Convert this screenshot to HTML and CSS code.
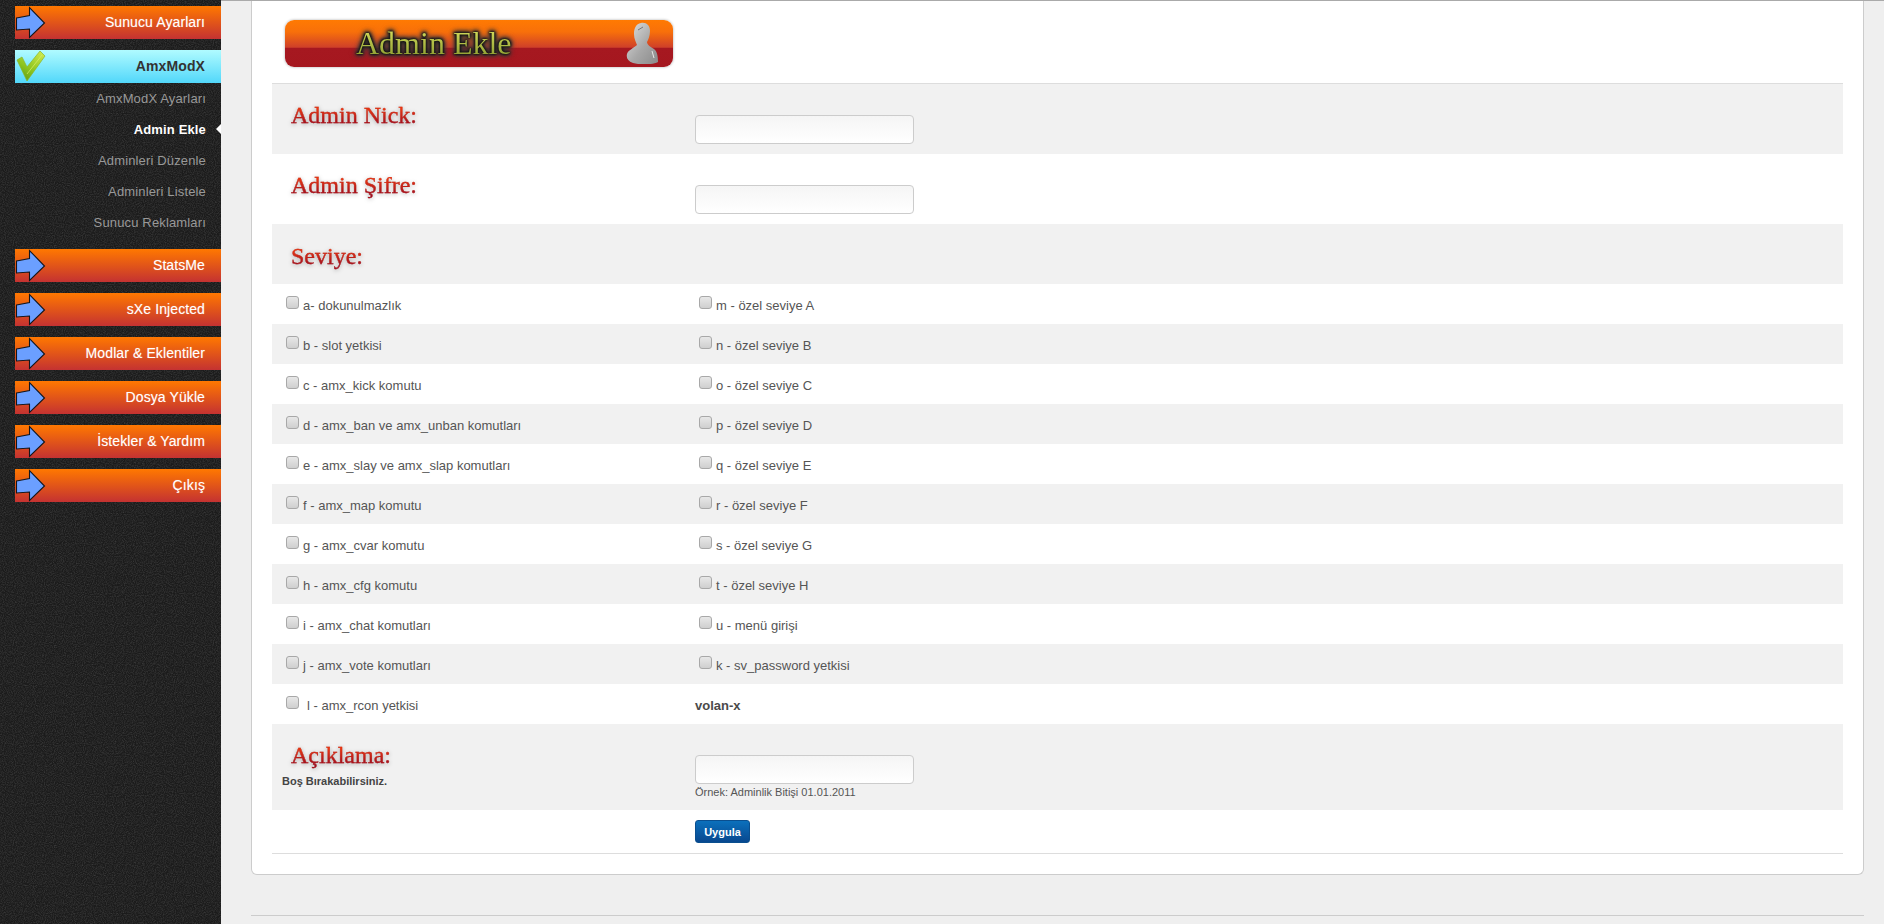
FILE: index.html
```html
<!DOCTYPE html>
<html lang="tr">
<head>
    <meta charset="UTF-8">
    <title>Admin Ekle</title>
    <link rel="stylesheet" href="styles.css">
</head>
<body>
    <svg class="defs" width="0" height="0">
        <defs>
            <symbol id="arrow" viewBox="0 0 32 33">
                <path d="M1.5 12 L14.5 9.5 L14.5 1.5 L29.5 17 L14.5 31.5 L14.5 23 L1.5 24 Z" fill="#6b9fff" stroke="#14161c" stroke-width="1.1" stroke-linejoin="miter"/>
            </symbol>
            <linearGradient id="checkFill" x1="0.8" y1="0" x2="0.2" y2="1">
                <stop offset="0" stop-color="#cbe84a"/>
                <stop offset="0.6" stop-color="#8cc41e"/>
                <stop offset="1" stop-color="#5f9e12"/>
            </linearGradient>
            <linearGradient id="userFill" x1="0" y1="0" x2="1" y2="1">
                <stop offset="0" stop-color="#e2e2e2"/>
                <stop offset="0.55" stop-color="#a8a8a8"/>
                <stop offset="1" stop-color="#8a8a8a"/>
            </linearGradient>
        </defs>
    </svg>

    <!-- Sidebar -->
    <aside class="sidebar">
        <a class="menu-item"><svg class="menu-icon"><use href="#arrow"/></svg>Sunucu Ayarları</a>
        <a class="menu-item active">
            <svg class="menu-icon" viewBox="0 0 32 33">
                <path d="M2 10 L7 7 L12 17 L25 1 L30 6 L12 31 Z" fill="url(#checkFill)" stroke="#8ab52a" stroke-width="0.7"/>
                <path d="M12 24 L27 5" stroke="#d9f06a" stroke-width="1" opacity="0.7" fill="none"/>
            </svg>
            AmxModX
        </a>
        <ul class="submenu">
            <li>AmxModX Ayarları</li>
            <li class="current">Admin Ekle</li>
            <li>Adminleri Düzenle</li>
            <li>Adminleri Listele</li>
            <li>Sunucu Reklamları</li>
        </ul>
        <a class="menu-item"><svg class="menu-icon"><use href="#arrow"/></svg>StatsMe</a>
        <a class="menu-item"><svg class="menu-icon"><use href="#arrow"/></svg>sXe Injected</a>
        <a class="menu-item"><svg class="menu-icon"><use href="#arrow"/></svg>Modlar &amp; Eklentiler</a>
        <a class="menu-item"><svg class="menu-icon"><use href="#arrow"/></svg>Dosya Yükle</a>
        <a class="menu-item"><svg class="menu-icon"><use href="#arrow"/></svg>İstekler &amp; Yardım</a>
        <a class="menu-item"><svg class="menu-icon"><use href="#arrow"/></svg>Çıkış</a>
    </aside>

    <main class="main">
        <div class="card">
            <!-- Page banner -->
            <div class="banner">
                <span class="banner-title">Admin Ekle</span>
                <svg class="banner-user" viewBox="0 0 32 42">
                    <path d="M15 1 C20 0 24 3 24 9 C24 14 22 18 21 20 C21 23 25 25 28 27 C31 29 32 34 32 40 C26 43 14 43 7 41 C2 39 0 36 1 32 C2 28 8 26 11 23 C10 20 8 17 8 12 C8 6 10 2 15 1 Z" fill="url(#userFill)"/>
                    <path d="M12 8 L17 5" stroke="#777" stroke-width="1" fill="none"/>
                    <path d="M26 29 L28 36" stroke="#e8e8e8" stroke-width="1" fill="none"/>
                </svg>
            </div>

            <form class="form">
                <div class="row head-row shaded">
                    <div class="cell-left"><span class="field-title">Admin Nick:</span></div>
                    <div class="cell-right"><input class="text-input" type="text"></div>
                </div>
                <div class="row head-row">
                    <div class="cell-left"><span class="field-title">Admin Şifre:</span></div>
                    <div class="cell-right"><input class="text-input" type="password"></div>
                </div>
                <div class="row level-head shaded">
                    <div class="cell-left"><span class="field-title">Seviye:</span></div>
                </div>

                <!-- Levels -->
                <div class="row check-row">
                    <label class="check"><input type="checkbox">a- dokunulmazlık</label>
                    <label class="check check-right"><input type="checkbox">m - özel seviye A</label>
                </div>
                <div class="row check-row shaded">
                    <label class="check"><input type="checkbox">b - slot yetkisi</label>
                    <label class="check check-right"><input type="checkbox">n - özel seviye B</label>
                </div>
                <div class="row check-row">
                    <label class="check"><input type="checkbox">c - amx_kick komutu</label>
                    <label class="check check-right"><input type="checkbox">o - özel seviye C</label>
                </div>
                <div class="row check-row shaded">
                    <label class="check"><input type="checkbox">d - amx_ban ve amx_unban komutları</label>
                    <label class="check check-right"><input type="checkbox">p - özel seviye D</label>
                </div>
                <div class="row check-row">
                    <label class="check"><input type="checkbox">e - amx_slay ve amx_slap komutları</label>
                    <label class="check check-right"><input type="checkbox">q - özel seviye E</label>
                </div>
                <div class="row check-row shaded">
                    <label class="check"><input type="checkbox">f - amx_map komutu</label>
                    <label class="check check-right"><input type="checkbox">r - özel seviye F</label>
                </div>
                <div class="row check-row">
                    <label class="check"><input type="checkbox">g - amx_cvar komutu</label>
                    <label class="check check-right"><input type="checkbox">s - özel seviye G</label>
                </div>
                <div class="row check-row shaded">
                    <label class="check"><input type="checkbox">h - amx_cfg komutu</label>
                    <label class="check check-right"><input type="checkbox">t - özel seviye H</label>
                </div>
                <div class="row check-row">
                    <label class="check"><input type="checkbox">i - amx_chat komutları</label>
                    <label class="check check-right"><input type="checkbox">u - menü girişi</label>
                </div>
                <div class="row check-row shaded">
                    <label class="check"><input type="checkbox">j - amx_vote komutları</label>
                    <label class="check check-right"><input type="checkbox">k - sv_password yetkisi</label>
                </div>
                <div class="row check-row">
                    <label class="check check-last"><input type="checkbox">l - amx_rcon yetkisi</label>
                    <div class="cell-right owner">volan-x</div>
                </div>

                <div class="row note-row shaded">
                    <div class="cell-left">
                        <span class="field-title">Açıklama:</span>
                        <p class="note">Boş Bırakabilirsiniz.</p>
                    </div>
                    <div class="cell-right">
                        <input class="text-input" type="text">
                        <p class="hint">Örnek: Adminlik Bitişi 01.01.2011</p>
                    </div>
                </div>
                <div class="row submit-row">
                    <div></div>
                    <div class="cell-right"><button class="btn" type="button">Uygula</button></div>
                </div>
            </form>
        </div>
        <div class="footer-line"></div>
    </main>
</body>
</html>
```
FILE: styles.css
```css
html, body {
    margin: 0;
    padding: 0;
    height: 100%;
}
body {
    display: flex;
    font-family: "Liberation Sans", Arial, sans-serif;
    font-size: 13px;
    color: #555;
    background-color: #efefef;
    overflow: hidden;
}
.defs {
    position: absolute;
}

/* Sidebar */
.sidebar {
    flex: 0 0 221px;
    box-sizing: border-box;
    height: 924px;
    padding: 6px 0 0 15px;
    background-color: #1b1b1b;
    background-image: url("data:image/svg+xml,%3Csvg xmlns='http://www.w3.org/2000/svg' width='200' height='200'%3E%3Cfilter id='n'%3E%3CfeTurbulence type='fractalNoise' baseFrequency='0.9' numOctaves='2' stitchTiles='stitch'/%3E%3CfeColorMatrix values='0 0 0 0 1 0 0 0 0 1 0 0 0 0 1 0.25 0 0 0 -0.09'/%3E%3C/filter%3E%3Crect width='200' height='200' filter='url(%23n)'/%3E%3C/svg%3E");
}
.menu-item {
    position: relative;
    display: block;
    height: 33px;
    line-height: 33px;
    margin-bottom: 11px;
    padding-right: 16px;
    text-align: right;
    font-size: 14px;
    letter-spacing: 0.1px;
    color: #fff;
    background: linear-gradient(#ff7800, #c43232);
    text-shadow: 0 0 1px rgba(255, 255, 255, 0.4);
}
.menu-item.active {
    margin-bottom: 0;
    font-weight: bold;
    color: #333;
    background: linear-gradient(#b0fbff, #52d7fa);
    text-shadow: none;
}
.menu-icon {
    position: absolute;
    left: 0;
    top: 0;
    width: 32px;
    height: 33px;
    overflow: visible;
}
.submenu {
    list-style: none;
    margin: 0 0 11px;
    padding: 0;
}
.submenu li {
    position: relative;
    height: 31px;
    line-height: 31px;
    padding-right: 15px;
    text-align: right;
    letter-spacing: 0.15px;
    color: #999;
}
.submenu li.current {
    font-weight: bold;
    color: #fff;
}
.submenu li.current::after {
    content: "";
    position: absolute;
    right: 0;
    top: 10px;
    border: 5px solid transparent;
    border-left: 0;
    border-right-color: #fff;
}

/* Main area */
.main {
    flex: 1;
    box-sizing: border-box;
    height: 924px;
    padding: 0 20px 0 30px;
    border-top: 1px solid #aaa;
}
.card {
    padding: 19px 20px 20px;
    background-color: #fff;
    border: 1px solid #ccc;
    border-top: 0;
    border-radius: 0 0 6px 6px;
}
.footer-line {
    margin-top: 40px;
    border-top: 1px solid #ccc;
}

/* Banner */
.banner {
    position: relative;
    box-sizing: border-box;
    width: 388px;
    height: 47px;
    margin: 0 0 16px 13px;
    padding-left: 71px;
    border-radius: 9px;
    background: linear-gradient(#ff7a02 0%, #f8700a 25%, #cf4029 58%, #a61820 60%, #a5171f 100%);
    box-shadow: 0 0 2px 1px #d8d8d8;
}
.banner-title {
    display: inline-block;
    font-family: "Liberation Serif", "Times New Roman", serif;
    font-size: 32px;
    line-height: 47px;
    background: linear-gradient(#d4dc5c 20%, #8c9c30 80%);
    -webkit-background-clip: text;
    background-clip: text;
    color: transparent;
    filter: drop-shadow(0 0 1px #111) drop-shadow(0 0 1px #111) drop-shadow(0 0 2px #222) drop-shadow(0 0 2px #444);
}
.banner-user {
    position: absolute;
    right: 15px;
    top: 2px;
    width: 32px;
    height: 42px;
}

/* Form rows */
.form {
    border-top: 1px solid #ddd;
}
.row {
    display: grid;
    grid-template-columns: 423px 1fr;
}
.shaded {
    background-color: #f1f1f1;
}
.head-row {
    height: 70px;
}
.level-head {
    height: 60px;
}
.check-row {
    height: 40px;
    align-items: center;
}
.note-row {
    height: 86px;
}
.submit-row {
    height: 43px;
    border-bottom: 1px solid #ddd;
}
.cell-left {
    padding: 16px 0 0 19px;
}
.level-head .cell-left {
    padding-top: 17px;
}
.note-row .cell-left {
    padding: 16px 0 0 10px;
}
.note-row .field-title {
    margin-left: 9px;
}
.field-title {
    display: inline-block;
    font-family: "Liberation Serif", "Times New Roman", serif;
    font-size: 24px;
    line-height: 30px;
    background: linear-gradient(#f03a10 25%, #a01020 80%);
    -webkit-background-clip: text;
    background-clip: text;
    color: transparent;
    -webkit-text-stroke: 0.3px rgba(170, 20, 20, 0.5);
    filter: drop-shadow(0 1px 2px rgba(0, 0, 0, 0.3));
}
.note {
    margin: 5px 0 0;
    font-size: 11px;
    font-weight: bold;
    color: #444;
}
.text-input {
    display: block;
    box-sizing: border-box;
    width: 219px;
    height: 29px;
    margin: 31px 0 0;
    border: 1px solid #ccc;
    border-radius: 4px;
    background: linear-gradient(#f5f5f5, #fff);
}
.hint {
    margin: 2px 0 0;
    font-size: 11px;
    line-height: 13px;
    color: #555;
}
.check {
    display: flex;
    align-items: center;
    padding: 2px 0 0 14px;
    white-space: pre;
}
.check input {
    appearance: none;
    -webkit-appearance: none;
    flex: none;
    width: 13px;
    height: 13px;
    margin: -5px 4px 0 0;
    border: 1px solid #a8a8a8;
    border-radius: 3px;
    background: linear-gradient(#e8e8e8, #cfcfcf);
}
.check-right {
    padding-left: 4px;
}
.check-last input {
    margin-right: 8px;
}
.owner {
    padding-top: 2px;
    font-weight: bold;
    color: #4a4a4a;
}
.btn {
    display: block;
    box-sizing: border-box;
    width: 55px;
    height: 23px;
    margin: 10px 0 0;
    padding: 0;
    border: 1px solid #0a4f8f;
    border-radius: 3px;
    background: linear-gradient(#0b70bc, #08488f);
    color: #fff;
    font-family: "Liberation Sans", Arial, sans-serif;
    font-size: 11px;
    font-weight: bold;
}
```
